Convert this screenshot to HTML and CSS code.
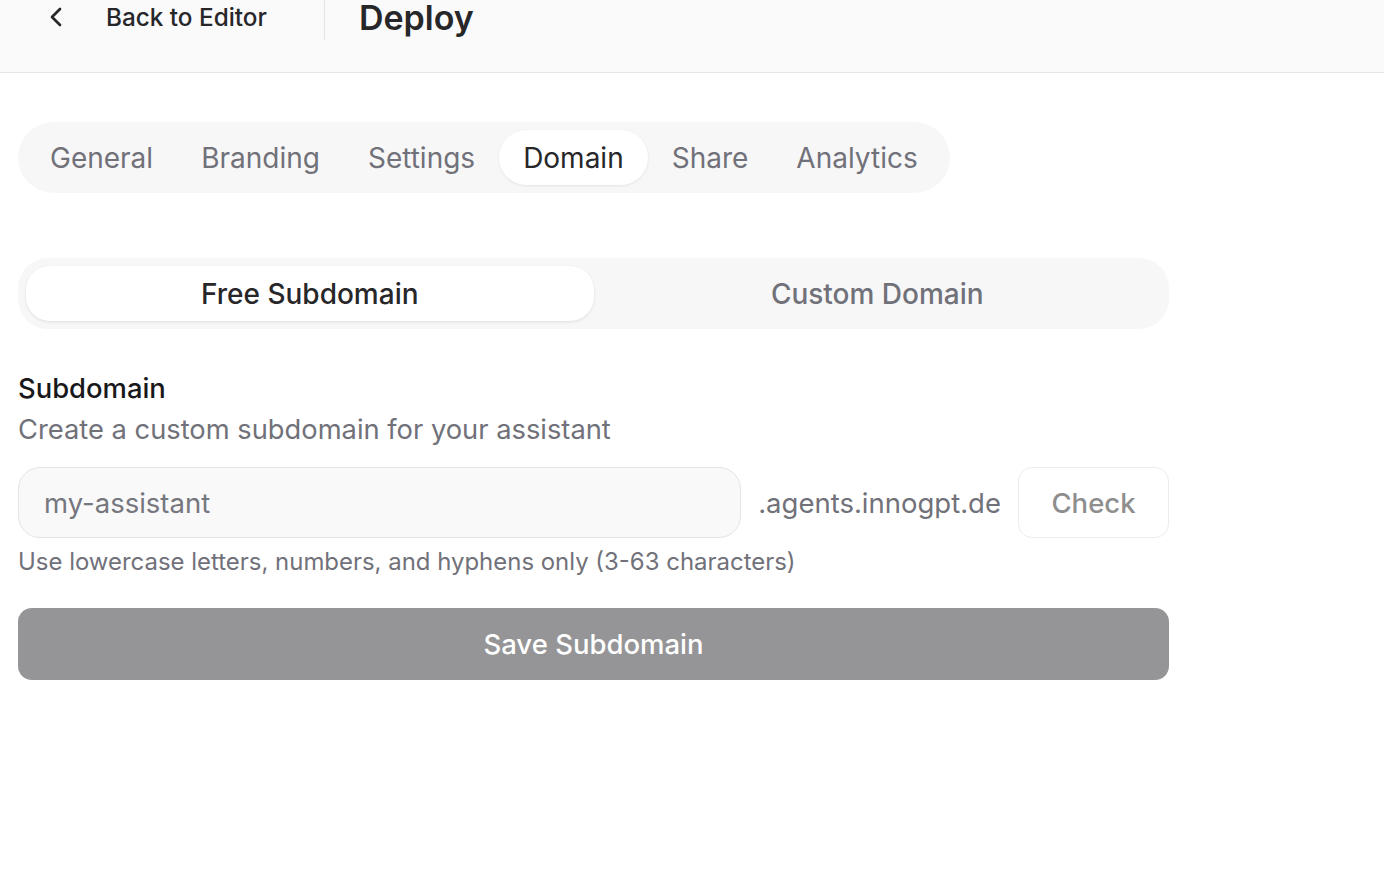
FILE: index.html
```html
<!DOCTYPE html>
<html lang="en">
<head>
<meta charset="utf-8">
<title>Deploy</title>
<link rel="stylesheet" href="styles.css">
</head>
<body>
<header class="topbar">
  <div class="topbar-row">
    <button class="back-btn" type="button">
      <svg class="back-icon" viewBox="0 0 24 24" fill="none" stroke="currentColor" stroke-width="2" stroke-linecap="round" stroke-linejoin="round"><path d="m15 18-6-6 6-6"/></svg>
      <span>Back to Editor</span>
    </button>
    <div class="divider"></div>
    <h1 class="title">Deploy</h1>
  </div>
</header>
<main class="content">
  <nav class="tabs">
    <span class="tab">General</span>
    <span class="tab">Branding</span>
    <span class="tab">Settings</span>
    <span class="tab active">Domain</span>
    <span class="tab">Share</span>
    <span class="tab">Analytics</span>
  </nav>

  <div class="segmented">
    <span class="seg active">Free Subdomain</span>
    <span class="seg">Custom Domain</span>
  </div>

  <section class="field">
    <h2 class="field-label">Subdomain</h2>
    <p class="field-desc">Create a custom subdomain for your assistant</p>
    <div class="input-row">
      <input class="text-input" type="text" placeholder="my-assistant">
      <span class="suffix">.agents.innogpt.de</span>
      <button class="check-btn" type="button">Check</button>
    </div>
    <p class="hint">Use lowercase letters, numbers, and hyphens only (3-63 characters)</p>
    <button class="save-btn" type="button">Save Subdomain</button>
  </section>
</main>
</body>
</html>
```
FILE: styles.css
```css
* { box-sizing: border-box; }
html, body { margin: 0; padding: 0; }
body {
  font-family: Inter, "Noto Sans", "Liberation Sans", sans-serif;
  background: #ffffff;
  color: #18181b;
  width: 1384px;
  height: 884px;
  overflow: hidden;
}

.topbar {
  height: 73px;
  background: #fafafa;
  border-bottom: 1px solid #e6e6e6;
}
.topbar-row {
  display: flex;
  align-items: flex-start;
  height: 40px;
}
.back-btn {
  display: flex;
  align-items: center;
  gap: 34px;
  height: 34px;
  margin-left: 40px;
  padding: 0;
  border: 0;
  background: transparent;
  font-family: inherit;
  font-size: 24.3px;
  font-weight: 500;
  color: #27272a;
}
.back-icon { width: 32px; height: 32px; color: #27272a; }
.divider {
  width: 1px;
  height: 40px;
  background: #e4e4e7;
  margin-left: 57px;
}
.title {
  margin: 1px 0 0 34px;
  height: 34px;
  line-height: 34px;
  font-size: 34px;
  font-weight: 600;
  color: #27272a;
}

.content {
  padding: 49px 18px 0 18px;
  width: 1187px;
}

.tabs {
  display: inline-flex;
  background: #f7f7f7;
  border-radius: 36px;
  padding: 8px;
  height: 71px;
}
.tab {
  display: flex;
  align-items: center;
  height: 55px;
  padding: 0 24px;
  font-size: 28px;
  color: #71717a;
  border-radius: 28px;
}
.tab.active {
  background: #ffffff;
  color: #27272a;
  box-shadow: 0 1px 3px rgba(0,0,0,0.08);
}

.segmented {
  display: grid;
  grid-template-columns: 1fr 1fr;
  margin-top: 65px;
  background: #f7f7f7;
  border-radius: 30px;
  padding: 8px;
  height: 71px;
}
.seg {
  display: flex;
  align-items: center;
  justify-content: center;
  height: 55px;
  border-radius: 24px;
  font-size: 28px;
  font-weight: 500;
  color: #71717a;
}
.seg.active {
  background: #ffffff;
  color: #27272a;
  box-shadow: 0 1px 3px rgba(0,0,0,0.1);
}

.field { margin-top: 42px; }
.field-label {
  margin: 0;
  font-size: 27.4px;
  line-height: 34px;
  font-weight: 500;
  color: #18181b;
}
.field-desc {
  margin: 8px 0 0 0;
  font-size: 27.3px;
  line-height: 34px;
  color: #71717a;
}
.input-row {
  display: flex;
  align-items: center;
  gap: 17px;
  margin-top: 20px;
}
.text-input {
  flex: 1;
  height: 71px;
  border: 1.5px solid #e4e4e7;
  border-radius: 22px;
  background: #f9f9f9;
  padding: 0 25px;
  font-family: inherit;
  font-size: 27.5px;
  color: #27272a;
  outline: none;
}
.text-input::placeholder { color: #76767e; }
.suffix {
  font-size: 27.5px;
  color: #71717a;
}
.check-btn {
  width: 151px;
  height: 71px;
  border: 1.5px solid #ececec;
  border-radius: 14px;
  background: #ffffff;
  font-family: inherit;
  font-size: 27.5px;
  font-weight: 500;
  color: #8e8e8e;
}
.hint {
  margin: 9px 0 0 0;
  font-size: 23.95px;
  line-height: 30px;
  color: #71717a;
}
.save-btn {
  display: block;
  width: 100%;
  height: 72px;
  margin-top: 31px;
  border: 0;
  border-radius: 14px;
  background: #959597;
  color: #ffffff;
  font-family: inherit;
  font-size: 27.5px;
  font-weight: 500;
}
```
